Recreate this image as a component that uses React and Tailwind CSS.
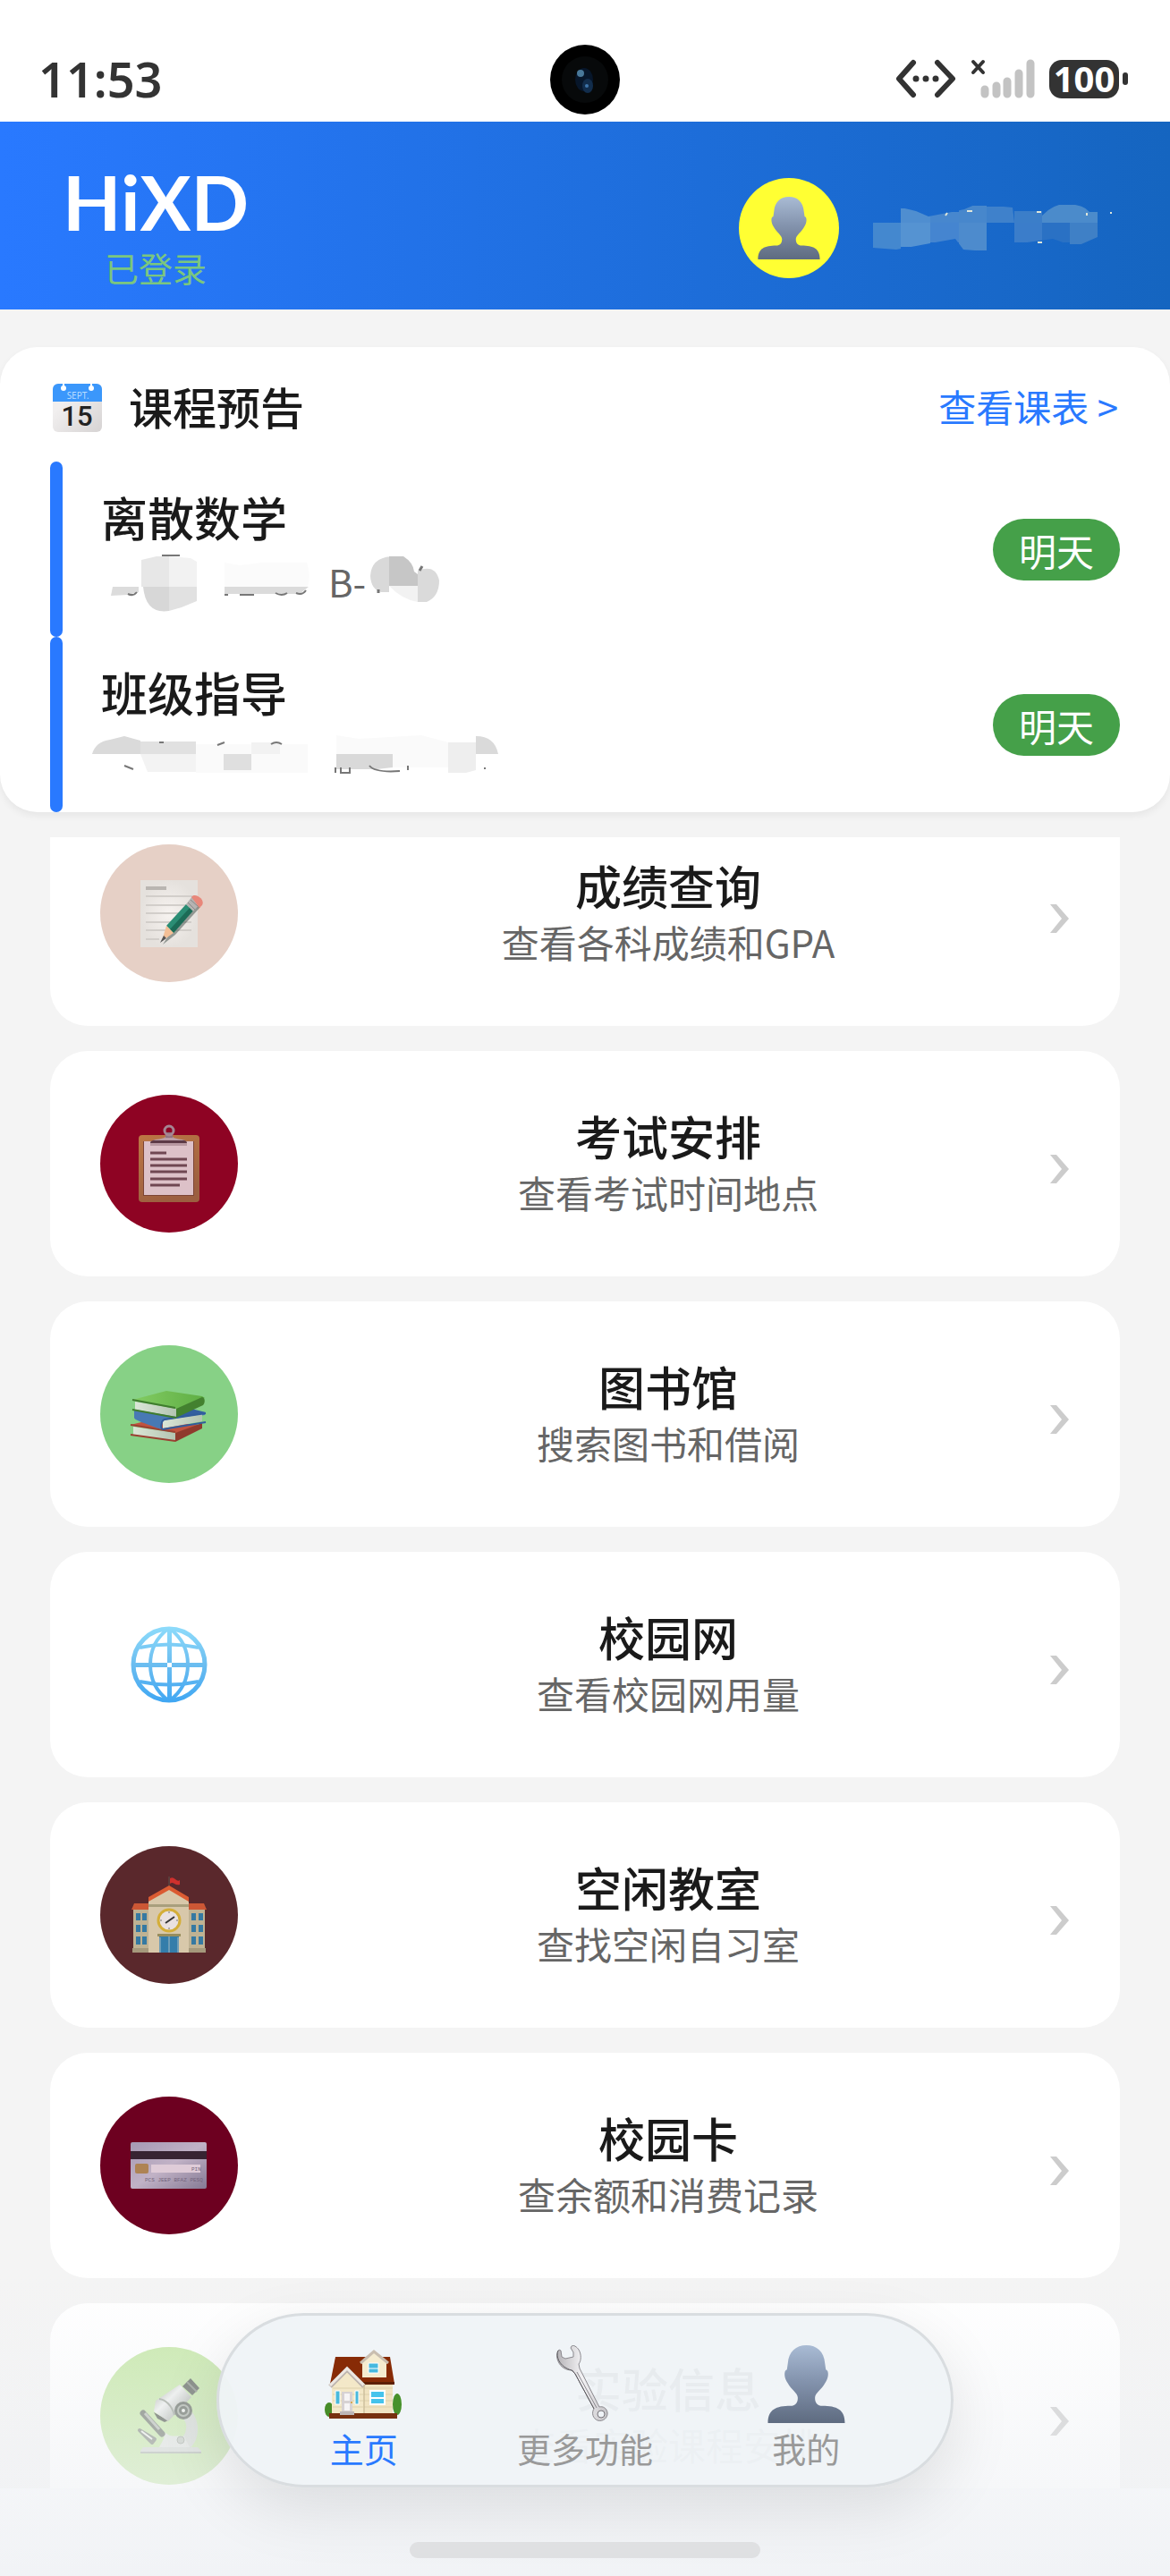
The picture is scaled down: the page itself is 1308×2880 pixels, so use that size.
import React, { useState } from 'react';

const courses = [
  { name: '离散数学', day: '明天' },
  { name: '班级指导', day: '明天' },
];

// [x, y, width, height, color]
const userMask = [
  [4, 22, 31, 30, '#4488cf'], [35, 6, 33, 16, '#4f8ed0'], [35, 22, 33, 27, '#5593d2'],
  [68, 10, 32, 12, '#4787ce'], [68, 22, 32, 22, '#4585d0'], [100, 3, 31, 19, '#4787cc'],
  [100, 22, 31, 31, '#4d8bcd'], [131, 4, 31, 18, '#3f81cb'], [162, 22, 31, 22, '#3b7dca'],
  [193, 2, 62, 20, '#4b8bcb'], [193, 22, 31, 22, '#2a71c4'], [224, 22, 31, 24, '#3f80c6'],
];

const Person = ({ className }) => (
  <svg viewBox="0 0 85 86" className={className} aria-hidden="true">
    <defs>
      <linearGradient id="person" x1="0" y1="0" x2="0" y2="1">
        <stop offset="0" stopColor="#a9bbd4" />
        <stop offset="0.45" stopColor="#8494ae" />
        <stop offset="1" stopColor="#5e6b80" />
      </linearGradient>
    </defs>
    <path fill="url(#person)" d="M42.5 0C54 0 62 7 63 20L64 27C68 28 67 37 63 42C60 48 52 53 52 58C52 64 55 67 60 67C76 67 85 71 85 86H0C0 71 9 67 25 67C30 67 33 64 33 58C33 53 25 48 22 42C18 37 17 28 21 27L22 20C23 7 31 0 42.5 0Z" />
  </svg>
);

const Calendar = () => (
  <svg viewBox="0 0 55 54" className="h-[54px] w-[55px] shrink-0" aria-hidden="true">
    <defs>
      <linearGradient id="calendar" x1="0" y1="0" x2="1" y2="1">
        <stop offset="0.3" stopColor="#f1efef" />
        <stop offset="1" stopColor="#d6d3d3" />
      </linearGradient>
    </defs>
    <rect width="55" height="54" rx="6" fill="url(#calendar)" />
    <path d="M0 20V6A6 6 0 0 1 6 0H49A6 6 0 0 1 55 6V20Z" fill="#3b97fb" />
    <path d="M12 0V5M43 0V5" stroke="#fff" strokeWidth="2" />
    <circle cx="12" cy="5" r="3" fill="#fff" />
    <circle cx="43" cy="5" r="3" fill="#fff" />
    <text x="28" y="17" textAnchor="middle" fontSize="10" fill="#b9dcff" fontFamily="Noto Sans, sans-serif">SEPT.</text>
    <text x="27" y="47" textAnchor="middle" fontSize="31" fontWeight="500" fill="#222" fontFamily="Roboto, sans-serif">15</text>
  </svg>
);

const Memo = () => (
  <>
    <defs>
      <radialGradient id="memo">
        <stop offset="0" stopColor="#f7f3f0" />
        <stop offset="1" stopColor="#e5e1dd" />
      </radialGradient>
    </defs>
    <rect x="45" y="40" width="64" height="75" fill="url(#memo)" />
    <path d="M51 49H74" stroke="#b9b5b1" strokeWidth="4" />
    <path d="M51 58H103M51 68H103M51 77H102M51 87H102M51 96H102M51 106H66" stroke="#d2ceca" strokeWidth="2" />
    <path d="M70 112L84 101L112 70L108 66L80 96Z" fill="#3c4a44" opacity="0.5" />
    <path d="M74 91L96 67L104 74L82 99Z" fill="#2b8d74" />
    <path d="M82 99L104 74L100 71L78 95Z" fill="#1c6b56" />
    <path d="M74 91L82 99L69 108Z" fill="#f3bf96" />
    <path d="M71 102L74 105L67 110Z" fill="#555" />
    <path d="M96 67L103 58L112 66L104 75Z" fill="#b5b3b2" />
    <path d="M98 65L106 73M101 62L109 69" stroke="#8b8988" />
    <path d="M102 59C105 53 118 61 114 68L111 71Z" fill="#e8877a" />
  </>
);

const Clipboard = () => (
  <>
    <defs>
      <linearGradient id="board" x1="0" y1="0" x2="0.4" y2="1">
        <stop offset="0" stopColor="#bd7744" />
        <stop offset="1" stopColor="#9c5f40" />
      </linearGradient>
    </defs>
    <rect x="43" y="45" width="68" height="75" rx="4" fill="url(#board)" />
    <rect x="48" y="52" width="57" height="61" fill="#7d4536" />
    <rect x="49" y="52" width="55" height="60" fill="#ddc1c8" />
    <path d="M56 57H97V54H56Z" fill="#b898a1" />
    <path d="M56 54C56 51 60 50 68 50H86C93 50 97 51 97 54Z" fill="#5d3a46" />
    <path d="M59 51C62 49 70 50 73 47H81C84 50 91 49 95 51Z" fill="#b99ca5" />
    <path d="M73 42H81V48H73Z" fill="#8f7380" />
    <circle cx="77" cy="40" r="5" fill="none" stroke="#a58593" strokeWidth="3" />
    <path d="M56 65H74M56 72H97M56 79H97M56 86H97M56 94H97M56 101H89" stroke="#704752" strokeWidth="3" />
  </>
);

const Books = () => (
  <>
    <defs>
      <linearGradient id="greenBook" x1="0" y1="0" x2="1" y2="0">
        <stop offset="0" stopColor="#83cc63" />
        <stop offset="1" stopColor="#5fae44" />
      </linearGradient>
      <linearGradient id="pages" x1="0" y1="0" x2="1" y2="0">
        <stop offset="0" stopColor="#dbe6d7" />
        <stop offset="1" stopColor="#b3c4b1" />
      </linearGradient>
    </defs>
    <path d="M34 89L50 85L114 89L85 98Z" fill="#c1533f" />
    <path d="M84 98L114 87V93L84 108Z" fill="#8f3a2d" />
    <path d="M37 91L84 98V107L37 100Z" fill="url(#pages)" />
    <path d="M34 89L84 97M34 100L84 107" stroke="#9b4032" strokeWidth="2" />
    <path d="M38 72L60 70L118 75L117 78L70 85L68 94C55 89 38 84 38 81Z" fill="#4879b4" />
    <path d="M86 78L102 71L118 75L70 85Z" fill="#335f9f" />
    <path d="M70 84L114 77V85L70 93Z" fill="url(#pages)" />
    <path d="M118 76L72 83C68 84 67 93 70 94L118 86" stroke="#315c9b" strokeWidth="2" fill="none" />
    <path d="M36 61L74 51L114 57L117 59L86 72Z" fill="url(#greenBook)" />
    <path d="M85 71L114 58C118 59 117 65 115 67L85 81Z" fill="#43812f" />
    <path d="M39 63L85 71V80L39 72Z" fill="url(#pages)" />
    <path d="M36 61L84 70M36 72L85 81" stroke="#3f7c2e" strokeWidth="2" />
  </>
);

const Globe = () => (
  <>
    <defs>
      <linearGradient id="globe" gradientUnits="userSpaceOnUse" x1="0" y1="34" x2="0" y2="120">
        <stop offset="0" stopColor="#8edcfb" />
        <stop offset="0.5" stopColor="#6bbdf0" />
        <stop offset="1" stopColor="#3ea6f3" />
      </linearGradient>
    </defs>
    <g fill="none" stroke="url(#globe)" strokeWidth="5">
      <circle cx="77" cy="77" r="40" />
      <path d="M75 36H80V118H75ZM36 75V80H118V75Z" stroke="none" fill="url(#globe)" />
      <path d="M76 37Q56 52 56 77T76 117M78 37Q98 52 98 77T78 117" strokeWidth="4" />
      <path d="M44 58Q77 51 110 58M44 96Q77 103 110 96" strokeWidth="4" />
    </g>
  </>
);

const School = () => (
  <>
    <path d="M77 45V34" stroke="#593e3c" strokeWidth="2" />
    <path d="M78 36Q81 34 84 37T89 38V43Q86 44 83 42T78 42Z" fill="#cf302d" />
    <path d="M37 70H117V119H37Z" fill="#bfb293" />
    <path d="M35 71L38 64H55V71ZM99 64H116L119 71H99Z" fill="#cc5735" />
    <path d="M54 60L77 46L99 60V119H54Z" fill="#d8c8aa" />
    <path d="M54 65H99V68H54Z" fill="#a99f7d" />
    <path d="M54 62V57L77 44L99 57V62L77 49Z" fill="#db5b32" />
    <circle cx="77" cy="83" r="12" fill="#e9e1e0" stroke="#d4ae38" strokeWidth="3" />
    <path d="M73 86L83 79" stroke="#333" strokeWidth="2" />
    <path d="M77 73V75M77 91V93M67 83H69M85 83H87" stroke="#777" />
    <path d="M64 98H90V101H64Z" fill="#988d5d" />
    <path d="M66 101H88V119H66Z" fill="#347daa" />
    <path d="M77 101V119M67 102V119M87 102V119" stroke="#a7bdc4" />
    <path d="M40 75h5v8h-5ZM47 75h5v8h-5ZM40 88h5v8h-5ZM47 88h5v8h-5ZM40 101h5v9h-5ZM47 101h5v9h-5ZM102 75h5v8h-5ZM110 75h5v8h-5ZM102 88h5v8h-5ZM110 88h5v8h-5ZM102 101h5v9h-5ZM110 101h5v9h-5Z" fill="#3579a2" />
    <path d="M36 114H54V119H36ZM99 114H118V119H99Z" fill="#a5997c" />
  </>
);

const BankCard = () => (
  <>
    <defs>
      <linearGradient id="bankCard" x1="0" y1="0" x2="1" y2="1">
        <stop offset="0" stopColor="#a598b3" />
        <stop offset="0.5" stopColor="#c1b2c6" />
        <stop offset="1" stopColor="#857a94" />
      </linearGradient>
    </defs>
    <rect x="34" y="51" width="85" height="52" rx="2" fill="url(#bankCard)" />
    <path d="M34 61H119V70H34Z" fill="#372432" />
    <rect x="39" y="75" width="15" height="11" rx="2" fill="#ae8354" />
    <path d="M57 76H112V85H57Z" fill="#dfccd8" />
    <text x="102" y="83" fontSize="6" fill="#75667e" fontFamily="Liberation Mono, monospace">PIN</text>
    <text x="50" y="95" fontSize="6" fill="#75667e" fontFamily="Liberation Mono, monospace">PCS JEEP BFAZ PESQ</text>
  </>
);

const Microscope = () => (
  <>
    <defs>
      <linearGradient id="tube" x1="0" y1="0" x2="1" y2="1">
        <stop offset="0" stopColor="#8c9388" />
        <stop offset="0.4" stopColor="#eef0ee" />
        <stop offset="1" stopColor="#7e857c" />
      </linearGradient>
    </defs>
    <path d="M100 70C112 80 112 104 100 113H76C84 103 92 104 95 96C97 90 97 84 92 80Z" fill="#d3d9d2" />
    <path d="M66 112C74 98 72 100 68 98L73 96C80 102 86 98 94 100L100 112Z" fill="#dfe4de" />
    <path d="M48 74L69 97" stroke="#6e776b" strokeWidth="7" strokeLinecap="round" />
    <path d="M50 74L66 92" stroke="#b5bcb3" strokeWidth="3" />
    <path d="M44 93L61 103L58 107Z" stroke="#838b80" strokeWidth="4" strokeLinejoin="round" fill="#dce2da" />
    <path d="M46 94L58 103" stroke="#eef2ec" strokeWidth="2" />
    <path d="M60 73L76 82L72 84L64 80Z" fill="#4e554c" />
    <path d="M89 42L102 56L76 83L60 72L62 60Z" fill="url(#tube)" />
    <path d="M66 58C73 59 80 65 83 76" stroke="#9aa197" strokeWidth="2" fill="none" />
    <path d="M101 35L111 46L103 54L92 44Z" fill="#60675f" />
    <path d="M97 39L108 50" stroke="#8b938a" strokeWidth="2" />
    <circle cx="93" cy="71" r="10" fill="#626a60" />
    <circle cx="93" cy="71" r="6" fill="none" stroke="#a8b0a6" strokeWidth="2" />
    <circle cx="93" cy="71" r="2" fill="#eef2ec" />
    <circle cx="90" cy="104" r="4" fill="#c1c9bf" stroke="#9da59a" />
    <path d="M48 112H109L113 116V119H45V116Z" fill="#d2d8d1" />
    <path d="M45 118H113" stroke="#aab2a8" strokeWidth="2" />
  </>
);

const House = () => (
  <svg viewBox="0 0 87 87" className="size-[87px]" aria-hidden="true">
    <g transform="translate(0 5)">
      <ellipse cx="5" cy="67" rx="5" ry="8" fill="#478c27" />
      <ellipse cx="81" cy="61" rx="5" ry="12" fill="#47912b" />
      <path d="M8 36H76V71H8Z" fill="#f0e3c1" />
      <path d="M12 8H73L78 38H6Z" fill="#872b06" />
      <path d="M40 36H78V39H40Z" fill="#5e2005" />
      <path d="M42 13L55 3L69 13V31H42Z" fill="#f5ecd0" />
      <path d="M40 15L55 2L71 15" stroke="#c9beb0" strokeWidth="3" fill="none" />
      <path d="M49 15H60V26H49Z" fill="#46b9df" stroke="#fff" strokeWidth="1" />
      <path d="M49 21H60" stroke="#fff" />
      <path d="M8 39L25 22L43 39V71H8Z" fill="#f3e8c8" />
      <path d="M9 43H43M9 50H43M9 57H43M9 64H43M44 43H76M44 50H76M44 57H76M44 64H76" stroke="#ded1ac" />
      <path d="M6 41L25 22L44 41" stroke="#bcb4ae" strokeWidth="5" fill="none" />
      <path d="M6 40L25 21L44 40" stroke="#eee8e2" strokeWidth="3" fill="none" />
      <path d="M44 39V71" stroke="#bdb08d" />
      <path d="M12 46H17V61H12ZM34 46H38V61H34Z" fill="#48b9dc" stroke="#fff" />
      <path d="M19 47H31V71H19Z" fill="#d7d2d3" />
      <path d="M22 49H28V57H22ZM22 60H28V68H22Z" fill="#f6f4f5" />
      <circle cx="30" cy="59" r="1" fill="#d59a2b" />
      <path d="M51 46H67V61H51Z" fill="#45c3ec" stroke="#fff" strokeWidth="2" />
      <path d="M51 54H67" stroke="#fff" strokeWidth="2" />
      <path d="M5 71H81V77H5Z" fill="#77300f" />
      <path d="M17 69H33V73H17Z" fill="#bdb7b7" />
    </g>
  </svg>
);

const Wrench = () => (
  <svg viewBox="0 0 87 87" className="size-[87px]" aria-hidden="true">
    <defs>
      <linearGradient id="wrench" x1="0" y1="0" x2="1" y2="0">
        <stop offset="0" stopColor="#b5b3b7" />
        <stop offset="0.5" stopColor="#f4f3f5" />
        <stop offset="1" stopColor="#c3c1c5" />
      </linearGradient>
    </defs>
    <path d="M15 5C12 8 12 14 14 18C17 25 23 28 30 28L33 32L54 71C51 76 53 82 58 84C64 86 70 81 69 75C68 70 64 68 60 69L38 26L37 21C40 17 40 10 37 5C35 2 31 -1 29 1L28 3L31 8V13L22 15L18 13L17 6Z" fill="url(#wrench)" stroke="#8b898e" strokeWidth="1" />
    <path d="M14 6C11 12 15 24 29 28L33 32L54 71" stroke="#5f5d62" strokeWidth="1" fill="none" />
    <path d="M35 30L57 70" stroke="#8b898e" strokeWidth="1" />
    <circle cx="62" cy="77" r="4" fill="#eff3f7" stroke="#77757a" />
  </svg>
);

const features = [
  { title: '成绩查询', desc: '查看各科成绩和GPA', bg: 'bg-[#e6d0c6]', Icon: Memo },
  { title: '考试安排', desc: '查看考试时间地点', bg: 'bg-[#8e0323]', Icon: Clipboard },
  { title: '图书馆', desc: '搜索图书和借阅', bg: 'bg-[#87d186]', Icon: Books },
  { title: '校园网', desc: '查看校园网用量', bg: 'bg-white', Icon: Globe },
  { title: '空闲教室', desc: '查找空闲自习室', bg: 'bg-[#5a282c]', Icon: School },
  { title: '校园卡', desc: '查余额和消费记录', bg: 'bg-[#6d0020]', Icon: BankCard },
  { title: '实验信息', desc: '查看实验课程安排', bg: 'bg-[#c6e8a8]', Icon: Microscope },
];

const tabs = [
  { id: 'home', label: '主页', icon: <House /> },
  { id: 'more', label: '更多功能', icon: <Wrench /> },
  { id: 'mine', label: '我的', icon: <Person className="size-[87px]" /> },
];

const StatusBar = () => (
  <div className="relative flex h-[136px] shrink-0 items-center justify-between bg-white pt-10 pr-[47px] pl-[43px] font-['Noto_Sans',sans-serif] text-[#333]">
    <span className="text-[54px] leading-none font-semibold">11:53</span>
    <svg viewBox="0 0 78 78" className="absolute top-[50px] left-1/2 size-[78px] -translate-x-1/2" aria-hidden="true">
      <circle cx="39" cy="39" r="39" fill="#000" />
      <circle cx="39" cy="39" r="26" fill="#07090a" />
      <ellipse cx="38" cy="39" rx="10" ry="13" fill="#07162a" />
      <ellipse cx="42" cy="46" rx="6" ry="8" fill="#122d4c" />
      <circle cx="34" cy="32" r="4" fill="#497899" />
      <circle cx="41" cy="46" r="2" fill="#3f75ab" />
    </svg>
    <div className="flex items-center">
      <svg viewBox="0 0 160 44" className="mr-4 h-11 w-40" aria-hidden="true">
        <g fill="none" stroke="#333" strokeWidth="6" strokeLinecap="round" strokeLinejoin="round">
          <path d="M24 4L8 22L24 40M51 4L68 22L51 40" />
          <path d="M27 22H27M38 22H38M49 22H49" strokeWidth="7" />
          <path d="M91 3L102 15M102 3L91 15" strokeWidth="4" />
        </g>
        <path d="M104 34V39M117 30V39M129 25V39M142 16V39M155 5V39" stroke="#c3c3c3" strokeWidth="9" strokeLinecap="round" />
      </svg>
      <span className="flex h-[43px] w-[78px] items-center justify-center rounded-[14px] bg-[#333] text-[40px] leading-none font-bold text-white">100</span>
      <span className="ml-1 h-[14px] w-[6px] rounded-[3px] bg-[#333]" />
    </div>
  </div>
);

const Header = () => (
  <header className="flex h-[210px] shrink-0 items-center justify-between bg-linear-to-r from-[#2979ff] to-[#1565c0] pt-7 pr-[51px] pl-[70px]">
    <div className="flex flex-col items-center">
      <h1 className="font-['Lato',sans-serif] text-[85px] leading-[84px] font-bold text-white">HiXD</h1>
      <span className="pt-1 text-[38px] leading-[56px] text-[#7bc67e]">已登录</span>
    </div>
    <div className="flex items-center gap-[34px]">
      <div className="flex size-28 items-center justify-center rounded-full bg-[#ffff33]">
        <Person className="size-[70px]" />
      </div>
      <svg viewBox="0 0 285 56" className="h-14 w-[285px]" aria-hidden="true">
        <defs>
          <clipPath id="userBrush">
            <path d="M4 22L35 22V5L52 9L66 15L92 10L106 7L120 1L160 5L162 22V14L193 14Q206 0 222 1Q240 2 246 10H255V38L230 49L205 40L162 46V22H131V54L105 52L96 40L68 45L30 52L4 50Z" />
          </clipPath>
        </defs>
        <g clipPath="url(#userBrush)">
          {userMask.map(([x, y, w, h, c]) => <rect key={`${x}-${y}`} x={x} y={y} width={w} height={h} fill={c} />)}
        </g>
        <path d="M162 9H193V22H162Z" fill="#3b7ec9" />
        <path d="M87 11L85 14M109 9H115M187 10H192M243 11V14M188 44H193M270 10V12" stroke="#dfe6da" strokeWidth="2" />
      </svg>
    </div>
  </header>
);

const MaskA = () => (
  <svg viewBox="0 0 250 76" className="h-[76px] w-[250px]" aria-hidden="true">
    <path d="M13 44H42V50L30 53L11 54Z" fill="#dcdcdc" />
    <path d="M45 14L62 10H76V44H45Z" fill="#e7e7e7" />
    <path d="M76 10L100 12L107 16V44H76Z" fill="#f2f2f2" />
    <path d="M47 44H76V71Q50 75 47 44Z" fill="#d7d7d7" />
    <path d="M76 44H107V60L90 67L76 71Z" fill="#e1e1e1" />
    <path d="M138 17L155 20L180 17L230 17Q235 30 231 44H138Z" fill="#fbfbfb" />
    <path d="M138 44H232L222 52H138Z" fill="#dbdbdb" />
    <path d="M138 53H142M155 53H171M195 51Q202 55 208 51M218 51Q225 54 229 48M30 52Q36 55 40 50M68 9H88" fill="none" stroke="#777" strokeWidth="2" />
  </svg>
);

const MaskB = () => (
  <svg viewBox="0 0 82 76" className="h-[76px] w-[82px]" aria-hidden="true">
    <path d="M28 10Q6 12 5 32Q6 47 17 50H26V10Z" fill="#d9d9d9" />
    <path d="M26 10H42Q53 17 54 27L58 30V43H26Z" fill="#c6c6c6" />
    <path d="M26 43H58V61Q40 58 26 43Z" fill="#f2f2f2" />
    <path d="M58 26Q78 18 82 37Q82 55 68 61H58Z" fill="#dadada" />
    <path d="M63 21L60 26M14 47V51" stroke="#777" strokeWidth="3" />
  </svg>
);

const MaskC = () => (
  <svg viewBox="0 0 470 60" className="-ml-3 h-[60px] w-[470px]" aria-hidden="true">
    <path d="M2 27Q6 13 22 11L38 7L56 12V27Z" fill="#dadada" />
    <path d="M56 13H118V27H56Z" fill="#e1e1e1" />
    <path d="M56 27H118V47H64Z" fill="#f3f3f3" />
    <path d="M118 16H243V48H118Z" fill="#fafafa" />
    <path d="M149 27H180V45H149Z" fill="#dfdfdf" />
    <path d="M180 14H212V27H180Z" fill="#f2f2f2" />
    <path d="M275 6L300 10L370 6L400 14V42H275Z" fill="#fafafa" />
    <path d="M275 27H338V42L320 44H275Z" fill="#d9d9d9" />
    <path d="M400 14H431V45L420 48H400Z" fill="#eeeeee" />
    <path d="M431 7Q452 7 456 27H431Z" fill="#dadada" />
    <path d="M38 40L48 44M77 14H82M142 17L150 14M202 16Q208 12 214 16M274 42V48M280 42V48H290V42M312 40Q318 48 346 46M355 40V45M441 42V44" stroke="#777" strokeWidth="2" fill="none" />
  </svg>
);

const CoursePreview = () => (
  <section className="z-10 mt-[42px] shrink-0 rounded-[42px] bg-white pt-4 shadow-[0_4px_8px_rgba(0,0,0,0.06)]">
    <div className="flex h-28 items-center pr-[58px] pb-2 pl-[59px]">
      <Calendar />
      <h2 className="ml-[30px] flex-1 pb-1 text-[49px] leading-[60px] font-medium text-[#1a1a1a]">课程预告</h2>
      <a href="#schedule" className="pb-1 text-[42px] leading-[60px] text-[#2979ff]">查看课表 &gt;</a>
    </div>
    {courses.map((course, i) => (
      <div key={course.name} className="flex h-[196px] items-center px-14">
        <span className="h-full w-[14px] rounded-[7px] bg-[#2979ff]" />
        <div className="ml-[43px] flex-1">
          <h3 className="text-[52px] leading-[72px] font-medium text-[#1a1a1a]">{course.name}</h3>
          <div className="flex h-[72px] items-center text-[42px] leading-none text-[#666]">
            {i === 0 ? <><MaskA /><span className="ml-1">B-</span><MaskB /></> : <MaskC />}
          </div>
        </div>
        <span className="rounded-full bg-[#45a049] px-[29px] py-1 text-[42px] leading-[61px] text-white">{course.day}</span>
      </div>
    ))}
  </section>
);

const FeatureCard = ({ title, desc, bg, Icon }) => (
  <button className="flex h-[252px] w-full shrink-0 items-center rounded-[42px] bg-white px-14">
    <span className={`${bg} mr-[54px] size-[154px] shrink-0 rounded-full`}>
      <svg viewBox="0 0 154 154" className="size-full" aria-hidden="true"><Icon /></svg>
    </span>
    <span className="flex flex-1 flex-col text-center">
      <span className="text-[52px] leading-[64px] font-medium text-[#1a1a1a]">{title}</span>
      <span className="text-[42px] leading-[62px] text-[#666]">{desc}</span>
    </span>
    <svg viewBox="0 0 22 32" className="mt-3 h-8 w-[22px] shrink-0" aria-hidden="true">
      <path d="M0 0H7L21 16L7 32H0L13 16Z" fill="#ccc" />
    </svg>
  </button>
);

const BottomNav = () => {
  const [active, setActive] = useState('home');
  return (
    <nav className="absolute bottom-[99px] left-1/2 flex h-[195px] w-[824px] -translate-x-1/2 rounded-full border-3 border-[#d9dde0] bg-[#eff3f7]/95 px-[38px] shadow-[0_24px_70px_rgba(0,0,0,0.1)]">
      {tabs.map(tab => (
        <button
          key={tab.id}
          onClick={() => setActive(tab.id)}
          className={`flex flex-1 flex-col items-center pt-[33px] text-[38px] leading-[56px] ${active === tab.id ? 'text-[#2979ff]' : 'text-[#999]'}`}
        >
          {tab.icon}
          {tab.label}
        </button>
      ))}
    </nav>
  );
};

export default function App() {
  return (
    <div className="relative flex h-screen flex-col overflow-hidden bg-[#f4f4f4] font-['Noto_Sans_CJK_SC',sans-serif]">
      <StatusBar />
      <Header />
      <CoursePreview />
      <main className="mt-7 min-h-0 flex-1 overflow-hidden px-14">
        <div className="-mt-[41px] flex flex-col gap-7">
          {features.map(item => <FeatureCard key={item.title} {...item} />)}
        </div>
      </main>
      <div className="h-[98px] shrink-0 bg-[#fafbfd]" />
      <div className="absolute inset-x-0 bottom-0 h-[340px] bg-linear-to-b from-[#f0f2f5]/0 via-[#f0f2f5]/60 via-70% to-[#f0f2f5]/90" />
      <BottomNav />
      <div className="absolute bottom-5 left-1/2 h-[18px] w-[392px] -translate-x-1/2 rounded-full bg-[#dfe0e2]" />
    </div>
  );
}
